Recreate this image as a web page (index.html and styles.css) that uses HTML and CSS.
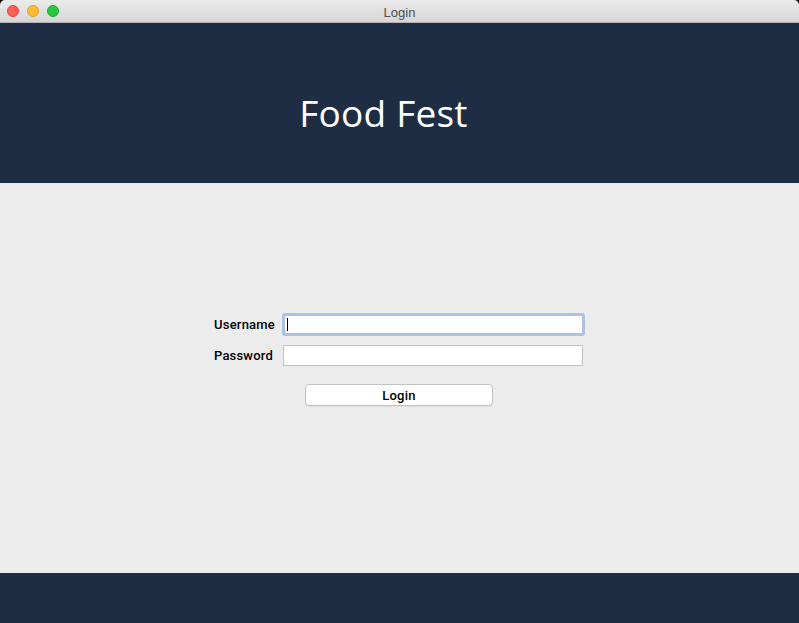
FILE: index.html
```html
<!DOCTYPE html>
<html>
<head>
<meta charset="utf-8">
<link rel="stylesheet" href="styles.css">
</head>
<body>
<div class="window">
  <div class="titlebar">
    <div class="lights">
      <span class="light red"></span>
      <span class="light yellow"></span>
      <span class="light green"></span>
    </div>
    <div class="title">Login</div>
  </div>
  <header class="banner">
    <h1 class="brand">Food Fest</h1>
  </header>
  <main class="content">
    <form class="form">
      <div class="row">
        <label class="label">Username</label>
        <div class="focusring"><div class="input"><span class="caret"></span></div></div>
      </div>
      <div class="row row2">
        <label class="label">Password</label>
        <div class="input plain"></div>
      </div>
      <div class="btnrow">
        <button type="button" class="btn">Login</button>
      </div>
    </form>
  </main>
  <footer class="footer"></footer>
</div>
</body>
</html>
```
FILE: styles.css
```css
html, body {
  margin: 0;
  padding: 0;
  width: 799px;
  height: 623px;
  overflow: hidden;
  background: #000;
  font-family: "Open Sans", "Liberation Sans", sans-serif;
}
.window {
  width: 799px;
  height: 623px;
  display: flex;
  flex-direction: column;
  border-radius: 5px 5px 0 0;
  overflow: hidden;
}
.titlebar {
  height: 22px;
  flex: none;
  background: linear-gradient(#ebebeb, #d6d6d6);
  border-bottom: 1px solid #b4b4b4;
  position: relative;
  display: flex;
  align-items: center;
  justify-content: center;
}
.lights {
  position: absolute;
  left: 7px;
  top: 5px;
  display: flex;
  gap: 8px;
}
.light {
  width: 12px;
  height: 12px;
  border-radius: 50%;
  box-sizing: border-box;
}
.red { background: #fe5f57; border: 1px solid #e0443e; }
.yellow { background: #febc2e; border: 1px solid #dea123; }
.green { background: #28c840; border: 1px solid #1aab29; }
.title {
  font-family: "Liberation Sans", sans-serif;
  font-size: 13px;
  color: #4d4d4d;
  padding-top: 2px;
}
.banner {
  height: 160px;
  flex: none;
  background: #1f2d44;
  display: flex;
  align-items: center;
  justify-content: center;
}
.brand {
  margin: 18px 0 0 -32px;
  color: #fff;
  font-family: "Open Sans", sans-serif;
  font-weight: 400;
  font-size: 37px;
  letter-spacing: 0.2px;
}
.content {
  flex: 1;
  background: #ececec;
  padding: 130px 0 0 205px;
  box-sizing: border-box;
}
.form {
  display: flex;
  flex-direction: column;
}
.row {
  display: flex;
  align-items: center;
  gap: 7px;
  height: 23px;
}
.row2 {
  margin-top: 9px;
  gap: 10px;
  height: 21px;
}
.label {
  font-family: Roboto, "Liberation Sans", sans-serif;
  font-weight: 500;
  font-size: 13px;
  letter-spacing: 0.2px;
  color: #000;
  width: 70px;
  text-align: right;
}
.row2 .label { width: 68px; }
.focusring {
  width: 303px;
  height: 23px;
  box-sizing: border-box;
  border: 2px solid #a9c3e6;
  border-radius: 3px;
  padding: 0;
}
.input {
  height: 19px;
  width: 299px;
  box-sizing: border-box;
  background: #fff;
  border: 1px solid #b8bfcc;
  display: flex;
  align-items: center;
  padding-left: 2px;
}
.input.plain {
  width: 300px;
  height: 21px;
  border: 1px solid #c3c3c3;
}
.caret {
  width: 1px;
  height: 13px;
  background: #000;
}
.btnrow {
  display: flex;
  margin-top: 18px;
  padding-left: 100px;
}
.btn {
  width: 188px;
  height: 22px;
  box-sizing: border-box;
  background: #fff;
  border: 1px solid #c2c2c2;
  border-radius: 4px;
  box-shadow: 0 1px 0 rgba(0,0,0,0.06);
  font-family: Roboto, "Liberation Sans", sans-serif;
  font-size: 13px;
  letter-spacing: 0.2px;
  font-weight: 500;
  color: #000;
  padding: 0;
}
.footer {
  height: 50px;
  flex: none;
  background: #1f2d44;
}
```
